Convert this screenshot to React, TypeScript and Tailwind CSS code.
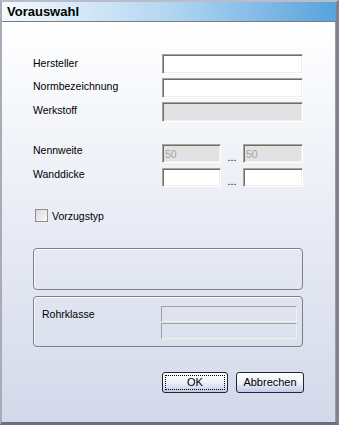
export default function App() {
  const sunken =
    "border border-t-[#a7a69a] border-l-[#a7a69a] border-r-white border-b-white shadow-[inset_1px_1px_0_#6f6e66,inset_-1px_-1px_0_#f1efe2]";
  return (
    <div className="w-[339px] h-[425px] flex flex-col font-['Liberation_Sans',Arial,sans-serif] text-black border-t-2 border-l-2 border-r-[3px] border-b-[3px] border-t-[#b9bccb] border-l-[#a9abb9] border-r-[#80828f] border-b-[#6b6d80]">
      <div className="h-[20px] shrink-0 flex items-center pl-[5px] border-b border-[#7c7c7c] bg-linear-to-r from-[#f5f9fd] via-[#b2d6f1] to-[#56a3dd]">
        <span className="text-[13px] font-bold leading-none">Vorauswahl</span>
      </div>
      <div className="flex-1 flex flex-col pl-[31px] pt-[32px] bg-linear-to-b from-white to-[#d3d9ea] border-r border-[#9a9aa8] text-[10.5px] leading-[12px]">
        {/* Hersteller */}
        <div className="flex items-start h-[20px]">
          <div className="w-[129px] pt-[3px]">Hersteller</div>
          <div className={`w-[141px] h-[20px] bg-white ${sunken}`} />
        </div>
        <div className="flex items-start h-[20px] mt-[4px]">
          <div className="w-[129px] pt-[2px]">Normbezeichnung</div>
          <div className={`w-[141px] h-[20px] bg-white ${sunken}`} />
        </div>
        <div className="flex items-start h-[20px] mt-[4px]">
          <div className="w-[129px] pt-[2px]">Werkstoff</div>
          <div className={`w-[141px] h-[20px] bg-[#e2e2e4] ${sunken}`} />
        </div>
        {/* Nennweite */}
        <div className="flex items-start h-[19px] mt-[22px]">
          <div className="w-[129px]">Nennweite</div>
          <div className={`w-[59px] h-[19px] bg-[#e2e2e4] ${sunken} flex items-center pl-[2px] text-[#a3a3a3]`}>50</div>
          <div className="w-[22px] self-end text-center leading-[12px]">...</div>
          <div className={`w-[60px] h-[19px] bg-[#e2e2e4] ${sunken} flex items-center pl-[2px] text-[#a3a3a3]`}>50</div>
        </div>
        <div className="flex items-start h-[19px] mt-[5px]">
          <div className="w-[129px]">Wanddicke</div>
          <div className={`w-[59px] h-[19px] bg-white ${sunken}`} />
          <div className="w-[22px] self-end text-center leading-[12px]">...</div>
          <div className={`w-[60px] h-[19px] bg-white ${sunken}`} />
        </div>
        {/* Checkbox */}
        <div className="flex items-center h-[13px] mt-[22px] ml-[2px]">
          <div className="w-[13px] h-[13px] border border-[#8e8f8f] bg-linear-to-br from-[#d8d8d5] to-[#fbfbfa]" />
          <span className="ml-[4px]">Vorzugstyp</span>
        </div>
        {/* Group 1 */}
        <div className="w-[270px] h-[42px] mt-[26px] rounded-[4px] border border-[#7d7f86] shadow-[inset_1px_1px_0_rgba(255,255,255,0.8)]" />
        {/* Group 2 */}
        <div className="w-[270px] h-[51px] mt-[6px] rounded-[4px] border border-[#7d7f86] shadow-[inset_1px_1px_0_rgba(255,255,255,0.8)] flex pt-[9px] pl-[8px]">
          <div className="w-[119px] h-[16px] flex items-center">Rohrklasse</div>
          <div className="flex flex-col gap-[1px]">
            <div className="w-[136px] h-[16px] border border-t-[#a0a0a0] border-l-[#a0a0a0] border-r-[#f3f1e4] border-b-[#f3f1e4]" />
            <div className="w-[136px] h-[16px] border border-t-[#a0a0a0] border-l-[#a0a0a0] border-r-[#f3f1e4] border-b-[#f3f1e4]" />
          </div>
        </div>
        {/* Buttons */}
        <div className="flex mt-[25px] pl-[129px] gap-[8px] text-[11px]">
          <div className="w-[66px] h-[21px] rounded-[3px] border border-[#1f2636] bg-linear-to-b from-white via-[#eef1f8] to-[#c2cbe4] p-[2px]">
            <div className="w-full h-full border border-dotted border-black flex items-center justify-center leading-none">OK</div>
          </div>
          <div className="w-[68px] h-[21px] rounded-[3px] border border-[#1f2636] bg-linear-to-b from-white via-[#eef1f8] to-[#c2cbe4] flex items-center justify-center leading-none">
            Abbrechen
          </div>
        </div>
      </div>
    </div>
  );
}
